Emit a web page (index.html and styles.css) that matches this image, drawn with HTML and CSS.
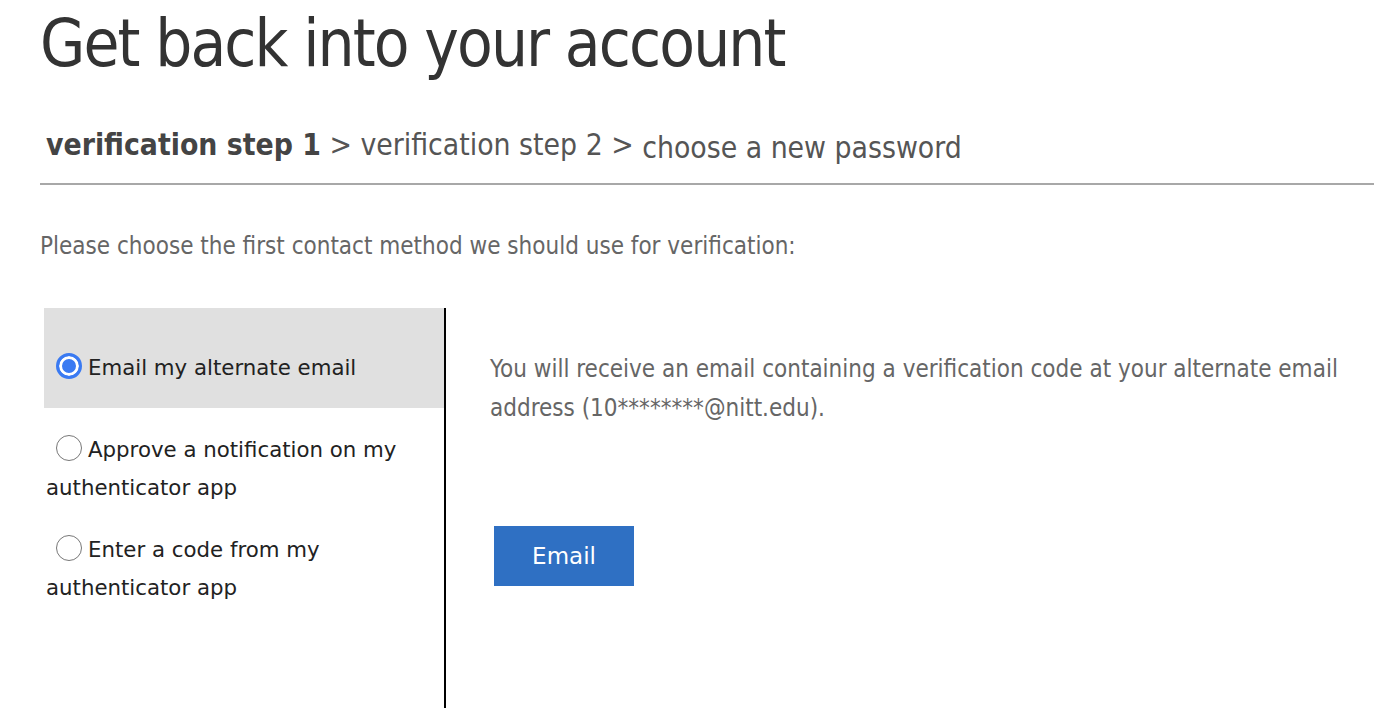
FILE: index.html
```html
<!DOCTYPE html>
<html>
<head>
<meta charset="utf-8">
<link rel="stylesheet" href="styles.css">
</head>
<body>
<div class="page">
  <h1 class="title">Get back into your account</h1>
  <div class="steps">
    <span class="step-current">verification step 1</span>
    <span class="sep">&gt;</span>
    <span class="step">verification step 2</span>
    <span class="sep">&gt;</span>
    <span class="step step-last">choose a new password</span>
  </div>
  <div class="rule"></div>
  <p class="intro">Please choose the first contact method we should use for verification:</p>
  <div class="methods">
    <div class="options">
      <div class="option selected">
        <span class="radio checked"></span>Email my alternate email
      </div>
      <div class="option">
        <span class="radio"></span>Approve a notification on my authenticator app
      </div>
      <div class="option">
        <span class="radio"></span>Enter a code from my authenticator app
      </div>
    </div>
    <div class="detail">
      <p class="detail-text">You will receive an email containing a verification code at your alternate email address (10********@nitt.edu).</p>
      <button class="btn">Email</button>
    </div>
  </div>
</div>
</body>
</html>
```

FILE: styles.css
```css
html, body {
  margin: 0;
  padding: 0;
  background: #fff;
  overflow: hidden;
}
.page {
  padding-left: 40px;
  height: 708px;
  display: flex;
  flex-direction: column;
}
.title {
  margin: 0;
  padding-top: 8px;
  font-family: "DejaVu Sans Condensed", "Liberation Sans Narrow", sans-serif;
  font-weight: normal;
  font-size: 65px;
  line-height: 72px;
  color: #333;
  letter-spacing: -1.9px;
}
.steps {
  margin-top: 48px;
  padding-left: 6px;
  font-family: "DejaVu Sans Condensed", sans-serif;
  font-size: 29.8px;
  line-height: 34px;
  color: #555;
}
.step-current {
  font-weight: bold;
  color: #444;
}
.step-last {
  position: relative;
  top: 3px;
}
.rule {
  margin-top: 21px;
  height: 2px;
  background: #a8a8a8;
}
.intro {
  margin: 48px 0 0 0;
  font-family: "DejaVu Sans Condensed", sans-serif;
  font-size: 24px;
  line-height: 26px;
  color: #666;
}
.methods {
  margin-top: 49px;
  margin-left: 4px;
  display: flex;
  flex: 1;
}
.options {
  width: 400px;
  border-right: 2px solid #000;
  flex: none;
}
.option {
  font-family: "DejaVu Sans", sans-serif;
  font-size: 21.3px;
  line-height: 38px;
  color: #222;
  padding: 23px 16px 1px 2px;
}
.option.selected {
  background: #e0e0e0;
  padding-top: 41px;
  padding-bottom: 21px;
}
.radio {
  display: inline-block;
  width: 26px;
  height: 26px;
  border: 1.5px solid #777;
  border-radius: 50%;
  margin: 0 6px 0 10px;
  vertical-align: -4px;
  box-sizing: border-box;
  background: #fff;
}
.radio.checked {
  border: 3px solid #3a7af2;
  background: #3a7af2;
  box-shadow: inset 0 0 0 3px #fff;
}
.detail {
  padding-left: 44px;
  padding-top: 42px;
  flex: 1;
}
.detail-text {
  margin: 0;
  font-family: "DejaVu Sans Condensed", sans-serif;
  font-size: 24px;
  line-height: 39px;
  color: #666;
  max-width: 860px;
}
.btn {
  margin-top: 98px;
  margin-left: 4px;
  width: 140px;
  height: 60px;
  border: none;
  background: #2f70c3;
  color: #fff;
  font-family: "DejaVu Sans", sans-serif;
  font-size: 23px;
  display: block;
}
```
